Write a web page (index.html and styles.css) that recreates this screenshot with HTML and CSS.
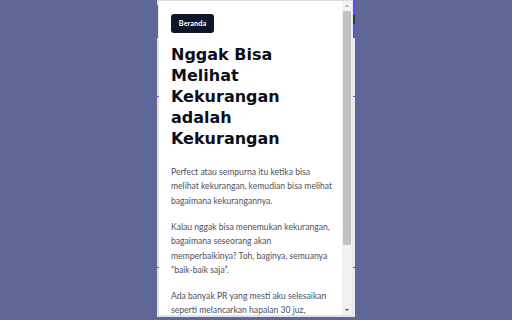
FILE: index.html
```html
<!DOCTYPE html>
<html lang="id">
<head>
<meta charset="utf-8">
<title>Nggak Bisa Melihat Kekurangan adalah Kekurangan</title>
<link rel="stylesheet" href="styles.css">
</head>
<body>
<div class="frame">
  <span class="mark mark-left-top"></span>
  <span class="mark mark-right-top"></span>
  <span class="mark mark-right-dot"></span>
  <span class="mark tick tick-l1"></span>
  <span class="mark tick tick-r1"></span>
  <span class="mark tick tick-l2"></span>
  <span class="mark tick tick-r2"></span>
  <div class="viewport">
    <article class="content">
      <a class="btn" href="#">Beranda</a>
      <h1 class="title">Nggak Bisa Melihat Kekurangan adalah Kekurangan</h1>
      <p class="para">Perfect atau sempurna itu ketika bisa melihat kekurangan, kemudian bisa melihat bagaimana kekurangannya.</p>
      <p class="para">Kalau nggak bisa menemukan kekurangan, bagaimana seseorang akan memperbaikinya? Toh, baginya, semuanya “baik-baik saja”.</p>
      <p class="para">Ada banyak PR yang mesti aku selesaikan seperti melancarkan hapalan 30 juz, menyelesaikan tugas kuliah, dan memperbaiki diri.</p>
    </article>
    <div class="scrollbar">
      <div class="arrow arrow-up"></div>
      <div class="track"><div class="thumb"></div></div>
      <div class="arrow arrow-down"></div>
    </div>
  </div>
</div>
</body>
</html>
```
FILE: styles.css
```css
* { box-sizing: border-box; }
html, body { margin: 0; padding: 0; }
body {
  background: #5f6698;
  width: 512px;
  height: 320px;
  overflow: hidden;
}
.frame {
  position: relative;
  width: 198px;
  height: 317px;
  margin: 0 auto;
  border-left: 2px solid #e4e4e6;
  border-right: 3px solid #e9e9ec;
  border-top: 1px solid #dcdcdc;
  border-bottom: 2px solid #e2e2e4;
  background: #fff;
}
.mark { position: absolute; display: block; }
.mark-left-top { left: -2px; top: 4px; width: 1px; height: 33px; background: #3d6fe6; }
.mark-right-top { right: -3px; top: -1px; width: 2px; height: 38px; background: #5b4fe0; }
.mark-right-dot { right: -3px; top: 14px; width: 2px; height: 9px; background: #1f4a2c; }
.tick { width: 2px; height: 1px; background: #8b3ff0; }
.tick-l1 { left: -2px; top: 95px; }
.tick-r1 { right: -3px; top: 95px; }
.tick-l2 { left: -2px; top: 266px; }
.tick-r2 { right: -3px; top: 266px; }
.viewport {
  display: flex;
  height: 100%;
}
.content {
  flex: 1;
  overflow: hidden;
  padding: 11px 8px 0 12px;
}
.btn {
  display: inline-flex;
  align-items: center;
  justify-content: center;
  width: 43px;
  height: 19px;
  background: #0f1628;
  color: #fff;
  border-radius: 3px;
  font-family: Lato, "Noto Sans", sans-serif;
  font-weight: 700;
  font-size: 7.4px;
  text-decoration: none;
}
.title {
  margin: 11px 0 0 0;
  font-family: "DejaVu Sans", sans-serif;
  font-weight: 700;
  font-size: 16px;
  line-height: 21px;
  color: #0b0f1a;
}
.para {
  margin: 16px 0 0 0;
  font-family: Lato, "Noto Sans", sans-serif;
  font-size: 8.6px;
  line-height: 14.4px;
  color: #4b5160;
}
.para + .para { margin-top: 11.5px; }
.scrollbar {
  width: 10px;
  flex: none;
  display: flex;
  flex-direction: column;
  background: #f1f1f1;
}
.arrow {
  height: 10px;
  flex: none;
  position: relative;
}
.arrow::after {
  content: "";
  position: absolute;
  left: 3px;
  width: 0;
  height: 0;
  border-left: 2px solid transparent;
  border-right: 2px solid transparent;
}
.arrow-up::after { top: 4px; border-bottom: 2px solid #a3a3a3; }
.arrow-down::after { top: 4px; border-top: 2px solid #505050; }
.track {
  flex: 1;
  padding: 0 1px;
}
.thumb {
  height: 234px;
  background: #c1c1c1;
}
```
